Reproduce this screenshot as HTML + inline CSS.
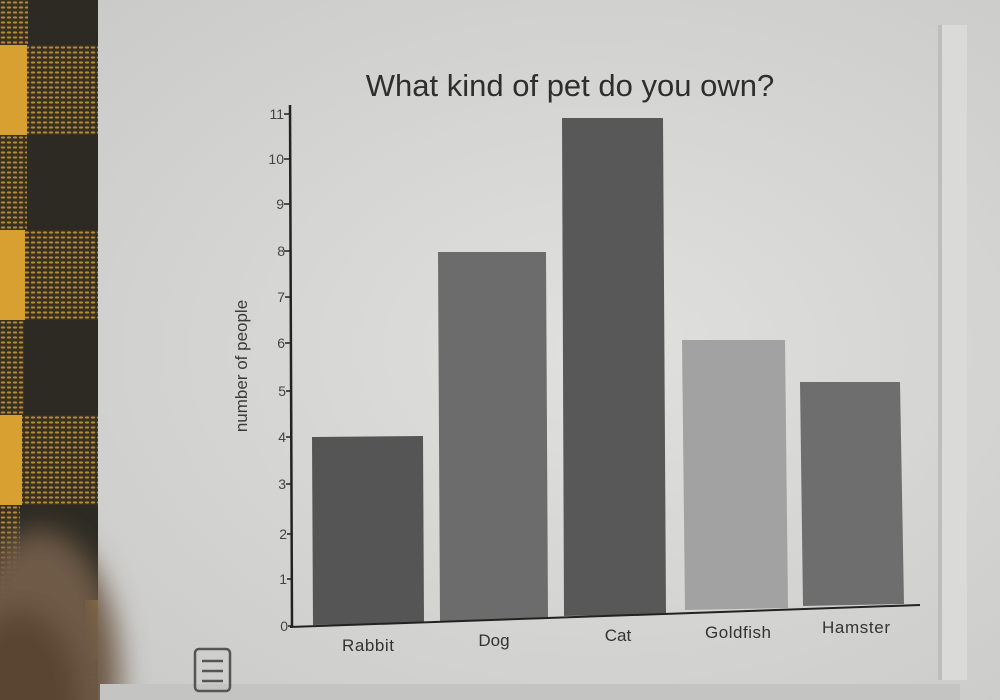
<!DOCTYPE html>
<html><head><meta charset="utf-8"><style>
html,body{margin:0;padding:0;width:1000px;height:700px;overflow:hidden;background:#d6d6d4}
svg{display:block;position:absolute;left:0;top:0}
text{font-family:"Liberation Sans",sans-serif}
</style></head><body>
<svg width="1000" height="700" viewBox="0 0 1000 700" xmlns="http://www.w3.org/2000/svg">
<defs>
<radialGradient id="pg" cx="0.6" cy="0.5" r="0.75">
<stop offset="0" stop-color="#e0e0de"/><stop offset="1" stop-color="#c9c9c7"/>
</radialGradient>
<filter id="bl" x="-50%" y="-50%" width="200%" height="200%"><feGaussianBlur stdDeviation="14"/></filter>
<pattern id="wv" width="6" height="5" patternUnits="userSpaceOnUse">
<rect width="6" height="5" fill="#3a3020"/><ellipse cx="3" cy="2.5" rx="2.2" ry="1.1" fill="#b08a38"/>
</pattern>
</defs>
<rect width="1000" height="700" fill="url(#pg)"/>
<!-- fabric -->
<rect x="0" y="0" width="98" height="700" fill="url(#wv)"/>
<rect x="0" y="45" width="27" height="90" fill="#d8a030"/>
<rect x="0" y="230" width="25" height="90" fill="#d8a030"/>
<rect x="0" y="415" width="22" height="90" fill="#d8a030"/>
<rect x="28" y="0" width="70" height="45" fill="#2c2a22"/>
<rect x="27" y="135" width="71" height="95" fill="#2c2a22"/>
<rect x="24" y="320" width="74" height="95" fill="#2c2a22"/>
<rect x="20" y="505" width="78" height="95" fill="#2c2a22"/>
<rect x="85" y="600" width="13" height="60" fill="#c89030"/>
<!-- finger -->
<g filter="url(#bl)">
<ellipse cx="40" cy="680" rx="80" ry="150" fill="#6e5a46"/>
<ellipse cx="20" cy="700" rx="60" ry="90" fill="#5a4432"/>
</g>
<!-- right edge -->
<rect x="938" y="25" width="4" height="655" fill="#bdbdbb"/>
<rect x="942" y="25" width="25" height="655" fill="#dadad8"/>
<rect x="100" y="684" width="860" height="16" fill="#c4c4c2"/>
<!-- title -->
<text x="570" y="96" font-size="31" fill="#2e2e2e" text-anchor="middle">What kind of pet do you own?</text>
<!-- y label -->
<text transform="translate(247,366) rotate(-90)" font-size="17" fill="#3a3a3a" text-anchor="middle">number of people</text>
<!-- bars -->
<polygon points="312,437 423,436 424,623 313,625" fill="#555555"/>
<polygon points="438,252 546,252 548,619 440,621" fill="#6c6c6c"/>
<polygon points="562,118 663,118 666,614 564,616" fill="#585858"/>
<polygon points="682,340 785,340 788,608 685,610" fill="#a2a2a2"/>
<polygon points="800,382 900,382 904,604 803,606" fill="#6e6e6e"/>
<!-- axes -->
<line x1="290" y1="105" x2="292" y2="627" stroke="#222" stroke-width="2.5"/>
<line x1="290" y1="627" x2="920" y2="605" stroke="#222" stroke-width="2"/>
<g font-size="14" fill="#444" text-anchor="end" font-family="Liberation Serif">
<text x="284" y="119">11</text><text x="284" y="164">10</text><text x="284" y="209">9</text>
<text x="285" y="256">8</text><text x="285" y="302">7</text><text x="285" y="348">6</text>
<text x="286" y="396">5</text><text x="286" y="442">4</text><text x="286" y="489">3</text>
<text x="287" y="539">2</text><text x="287" y="584">1</text><text x="288" y="631">0</text>
</g>
<g stroke="#222" stroke-width="1.5">
<line x1="284" y1="114" x2="291" y2="114"/><line x1="284" y1="159" x2="291" y2="159"/>
<line x1="284" y1="204" x2="291" y2="204"/><line x1="284" y1="251" x2="291" y2="251"/>
<line x1="285" y1="297" x2="291" y2="297"/><line x1="285" y1="343" x2="291" y2="343"/>
<line x1="286" y1="391" x2="292" y2="391"/><line x1="286" y1="437" x2="292" y2="437"/>
<line x1="286" y1="484" x2="292" y2="484"/><line x1="287" y1="534" x2="292" y2="534"/>
<line x1="287" y1="579" x2="292" y2="579"/><line x1="288" y1="626" x2="292" y2="626"/>
</g>
<g font-size="17" fill="#333" text-anchor="middle">
<text x="368" y="651" textLength="52">Rabbit</text><text x="494" y="646">Dog</text><text x="618" y="641">Cat</text>
<text x="738" y="638" textLength="66">Goldfish</text><text x="856" y="633" textLength="68">Hamster</text>
</g>
<!-- icon -->
<rect x="195" y="649" width="35" height="42" rx="4" fill="none" stroke="#555" stroke-width="2.5"/>
<g stroke="#555" stroke-width="2.5"><line x1="202" y1="661" x2="223" y2="661"/><line x1="202" y1="671" x2="223" y2="671"/><line x1="202" y1="681" x2="223" y2="681"/></g>
</svg>
</body></html>
